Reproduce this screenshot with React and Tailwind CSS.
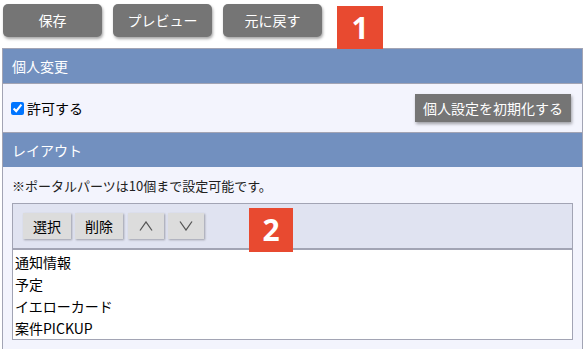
import React from 'react';

const font = { fontFamily: '"Noto Sans CJK JP", "Noto Sans", sans-serif' };

const topButtons = ['保存', 'プレビュー', '元に戻す'];
const parts = ['通知情報', '予定', 'イエローカード', '案件PICKUP'];

function Badge({ n, className }) {
	return (
		<div
			className={`absolute bg-[#e84a30] text-white font-bold text-[30px] leading-none flex items-center justify-center ${className}`}
			style={{ fontFamily: '"Open Sans", "Liberation Sans", sans-serif' }}
		>
			{n}
		</div>
	);
}

export default function App() {
	return (
		<div className="relative w-[588px] h-[349px] bg-white overflow-hidden text-[14px] text-black" style={font}>
			{/* 上部ボタン */}
			<div className="flex gap-[11px] pl-[3px] pt-[4px] h-[48px]">
				{topButtons.map((label) => (
					<button
						key={label}
						className="w-[99px] h-[33px] rounded-[5px] bg-[#757575] text-white text-[14px] shadow-[1px_2px_3px_rgba(0,0,0,0.35)]"
					>
						{label}
					</button>
				))}
			</div>
			<Badge n="1" className="left-[337px] top-[6px] w-[46px] h-[43px] z-10" />

			<div className="ml-[2px] w-[581px] border border-b-0 border-[#a2a4b4] bg-[#f3f4fd]">
				{/* 個人変更 */}
				<div className="h-[35px] bg-[#7290bf] text-white flex items-center pl-[9px] border-b border-[#a2a4b4]">
					個人変更
				</div>
				<div className="h-[48px] flex items-center justify-between pl-[8px] pr-[11px]">
					<label className="flex items-center gap-[3px]">
						<input type="checkbox" defaultChecked className="w-[13px] h-[13px] m-0 accent-[#0075ff]" />
						<span>許可する</span>
					</label>
					<button className="h-[28px] px-[8px] bg-[#757575] text-white text-[14px] shadow-[1px_2px_3px_rgba(0,0,0,0.35)]">
						個人設定を初期化する
					</button>
				</div>

				{/* レイアウト */}
				<div className="h-[35px] bg-[#7290bf] text-white flex items-center pl-[9px] border-t border-[#a2a4b4]">
					レイアウト
				</div>
				<div className="px-[9px] pt-[10px] pb-[20px]">
					<p className="text-[13px] leading-[18px] text-[#222]">※ポータルパーツは10個まで設定可能です。</p>
					<div className="relative mt-[8px] w-[561px] border border-[#a2a4b4]">
						<div className="h-[46px] bg-[#e0e3f1] flex items-center gap-[4px] pl-[10px] border-b-2 border-[#a2a4b4]">
							<button className="w-[48px] h-[26px] bg-[#dcdcdc] shadow-[1px_1px_2px_rgba(0,0,0,0.3)]">選択</button>
							<button className="w-[48px] h-[26px] bg-[#dcdcdc] shadow-[1px_1px_2px_rgba(0,0,0,0.3)]">削除</button>
							<button className="w-[36px] h-[26px] ml-[1px] bg-[#dcdcdc] shadow-[1px_1px_2px_rgba(0,0,0,0.3)] flex items-center justify-center">
								<svg width="14" height="10" viewBox="0 0 14 10" fill="none" stroke="#555" strokeWidth="1.3">
									<path d="M1 9.5 L7 1 L13 9.5" />
								</svg>
							</button>
							<button className="w-[36px] h-[26px] bg-[#dcdcdc] shadow-[1px_1px_2px_rgba(0,0,0,0.3)] flex items-center justify-center">
								<svg width="14" height="10" viewBox="0 0 14 10" fill="none" stroke="#555" strokeWidth="1.3">
									<path d="M1 0.5 L7 9 L13 0.5" />
								</svg>
							</button>
						</div>
						<ul className="bg-white h-[89px] pl-[2px] pt-[1px]">
							{parts.map((p) => (
								<li key={p} className="leading-[22px]">{p}</li>
							))}
						</ul>
						<Badge n="2" className="left-[236px] top-[4px] w-[44px] h-[44px]" />
					</div>
				</div>
			</div>
		</div>
	);
}
